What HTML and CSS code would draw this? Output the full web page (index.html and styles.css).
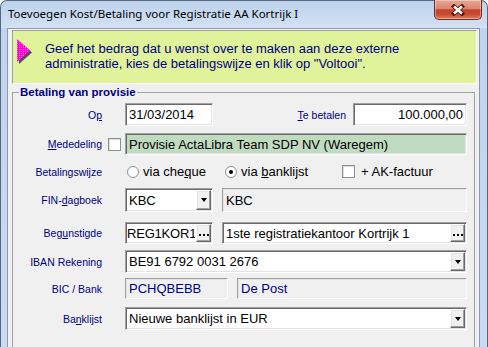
FILE: index.html
```html
<!doctype html>
<html lang="nl">
<head>
	<meta charset="UTF-8">
	<title>Toevoegen Kost/Betaling</title>

	<link rel="stylesheet" href="styles.css">

</head>
<body>
	<div class="window">
		<div class="titlebar">
			<span class="title">Toevoegen Kost/Betaling voor Registratie AA Kortrijk I</span>
			<div class="close">
				<svg width="14" height="12" viewBox="0 0 14 12">
					<path d="M3 2.5 L11 9.5 M11 2.5 L3 9.5" stroke="#4a1810" stroke-width="4.2" stroke-linecap="square"/>
					<path d="M3 2.5 L11 9.5 M11 2.5 L3 9.5" stroke="#fff" stroke-width="2.4"/>
				</svg>
			</div>
		</div>

		<div class="client">
			<div class="hint">
				<svg class="hintIcon" width="16" height="26" viewBox="0 0 16 26">
					<defs>
						<pattern id="dither" width="2" height="2" patternUnits="userSpaceOnUse">
							<rect width="2" height="2" fill="#ff00e0"/>
							<rect width="1" height="1" fill="#ff70c8"/>
						</pattern>
					</defs>
					<polygon points="2,2 2,25 15,13.5" fill="#505050"/>
					<polygon points="0,0 0,23 13,11.5" fill="url(#dither)"/>
				</svg>
				<p>Geef het bedrag dat u wenst over te maken aan deze externe<br>administratie, kies de betalingswijze en klik op "Voltooi".</p>
			</div>

			<fieldset class="group">
				<legend>Betaling van provisie</legend>

				<div class="row first">
					<label class="lbl">O<u>p</u></label>
					<div class="field short">31/03/2014</div>
					<label class="lbl lblFill"><u>T</u>e betalen</label>
					<div class="field amount">100.000,00</div>
				</div>

				<div class="row memoRow">
					<label class="lbl lblCheck"><u>M</u>ededeling</label>
					<span class="checkbox"></span>
					<div class="field memo">Provisie ActaLibra Team SDP NV (Waregem)</div>
				</div>

				<div class="row radioRow">
					<label class="lbl">Betalingswijze</label>
					<span class="opt opt1"><span class="radio"></span><span>via che<u>q</u>ue</span></span>
					<span class="opt opt2"><span class="radio on"></span><span>via <u>b</u>anklijst</span></span>
					<span class="opt"><span class="checkbox"></span><span>+ AK-factuur</span></span>
				</div>

				<div class="row dagboekRow">
					<label class="lbl">FIN-<u>d</u>agboek</label>
					<div class="field combo short"><span class="val">KBC</span><span class="btn"><i class="arrow"></i></span></div>
					<div class="ro next">KBC</div>
				</div>

				<div class="row begunstigdeRow">
					<label class="lbl">Beg<u>u</u>nstigde</label>
					<div class="field combo short"><span class="val tight">REG1KOR1</span><span class="btn"><i class="dots"></i></span></div>
					<div class="field combo next"><span class="val">1ste registratiekantoor Kortrijk 1</span><span class="btn"><i class="dots"></i></span></div>
				</div>

				<div class="row ibanRow">
					<label class="lbl">IBAN Rekening</label>
					<div class="field combo grow"><span class="val">BE91 6792 0031 2676</span><span class="btn"><i class="arrow"></i></span></div>
				</div>

				<div class="row bicRow">
					<label class="lbl">BIC / Bank</label>
					<div class="ro blue bic">PCHQBEBB</div>
					<div class="ro blue next">De Post</div>
				</div>

				<div class="row banklijstRow">
					<label class="lbl">Ba<u>n</u>klijst</label>
					<div class="field combo grow"><span class="val">Nieuwe banklijst in EUR</span><span class="btn"><i class="arrow"></i></span></div>
				</div>
			</fieldset>
		</div>
	</div>
</body>
</html>
```

FILE: styles.css
```css
* {
	box-sizing: border-box;
}

body {
	margin: 0;
	width: 488px;
	height: 347px;
	overflow: hidden;
	background: #fff;
	font-family: "Liberation Sans", Arial, sans-serif;
}

/* Aero style window frame */
.window {
	display: flex;
	flex-direction: column;
	height: 348px;
	padding: 0 7px 0 6px;
	border: 1px solid #56677f;
	border-bottom: none;
	border-radius: 7px 7px 0 0;
	background: linear-gradient(#bcd2ec, #d3e2f4 27px, #bfd5ee 27px, #c9dcf1);
}

.titlebar {
	display: flex;
	justify-content: space-between;
	align-items: flex-start;
	height: 27px;
	flex: none;
}

.title {
	padding: 5px 0 0 1px;
	font: 11.5px/16px "Noto Sans", sans-serif;
	color: #000;
}

.close {
	display: flex;
	align-items: center;
	justify-content: center;
	width: 48px;
	height: 20px;
	margin: -1px -2px 0 0;
	border: 1px solid #7a2a20;
	border-top: none;
	border-radius: 0 0 5px 5px;
	background: linear-gradient(#e9a898, #d98470 45%, #c4432d 52%, #c64a31 75%, #dd8060);
	box-shadow: inset 0 0 0 1px rgba(255,255,255,.35);
}

.client {
	flex: 1;
	background: #f0f0f0;
	border: 1px solid #8d99a9;
	border-bottom: none;
}

/* yellow info panel */
.hint {
	display: flex;
	align-items: flex-start;
	height: 54px;
	margin: 1px 2px 0 4px;
	border: 1px solid;
	border-color: #a0a0a0 #fff #fff #a0a0a0;
	background: #e0f29a;
}

.hintIcon {
	flex: none;
	margin: 8px 0 0 4px;
}

.hint p {
	margin: 10px 0 0 12px;
	font-size: 13px;
	line-height: 15px;
	color: #000080;
}

.group {
	min-width: 0;
	margin: 2px 4px 0;
	padding: 0 7px 40px 0;
	border: 1px solid #a0a0a0;
}

.group legend {
	margin-left: 6px;
	padding: 0 1px;
	font-size: 11.5px;
	font-weight: bold;
	line-height: 13px;
	color: #000080;
}

/* form rows */
.row {
	display: flex;
	align-items: center;
	height: 23px;
	margin-top: 7px;
}
.row.first { margin-top: 4px; }
.row.memoRow { height: 22px; }
.row.radioRow { height: 17px; margin-top: 8px; }
.row.dagboekRow { height: 24px; margin-top: 8px; }
.row.begunstigdeRow { height: 22px; margin-top: 10px; }
.row.ibanRow { margin-top: 6px; }
.row.bicRow { height: 21px; margin-top: 5px; }
.row.banklijstRow { margin-top: 8px; }

.lbl {
	flex: none;
	width: 89px;
	margin-right: 23px;
	text-align: right;
	font-size: 10.5px;
	color: #000080;
	white-space: nowrap;
}
.lbl.lblFill {
	flex: 1;
	width: auto;
	margin-right: 7px;
}
.lbl.lblCheck {
	margin-right: 6px;
}

/* sunken edit box */
.field {
	display: flex;
	align-items: center;
	height: 100%;
	padding: 0 3px;
	border: 1px solid;
	border-color: #a0a0a0 #fff #fff #a0a0a0;
	box-shadow: inset 1px 1px #696969, inset -1px -1px #e3e3e3;
	background: #fff;
	font-size: 13px;
	color: #000;
	white-space: nowrap;
	overflow: hidden;
}
.field.short { flex: none; width: 88px; }
.field.amount { flex: none; width: 114px; justify-content: flex-end; }
.field.memo { flex: 1; background: #c0dcc0; }
.field.grow { flex: 1; }
.field.next, .ro.next { flex: 1; margin-left: 9px; }

.field.combo { padding-right: 0; }
.field .val { flex: 1; overflow: hidden; }
/* the code fills the whole box, so it starts closer to the border */
.field .val.tight { margin-left: -2px; letter-spacing: -0.2px; }

.btn {
	display: flex;
	align-items: center;
	justify-content: center;
	flex: none;
	align-self: stretch;
	width: 15px;
	margin: 1px;
	border: 1px solid;
	border-color: #fff #696969 #696969 #fff;
	box-shadow: inset -1px -1px #a0a0a0, inset 1px 1px #e3e3e3;
	background: #f0f0f0;
}

.arrow {
	width: 0;
	height: 0;
	border-style: solid;
	border-width: 4px 3.5px 0;
	border-color: #000 transparent transparent;
}

.dots {
	width: 2px;
	height: 2px;
	margin-top: 3px;
	background: #000;
	box-shadow: -4px 0 #000, 4px 0 #000;
}

/* read only box */
.ro {
	display: flex;
	align-items: center;
	height: 100%;
	padding: 0 3px;
	border: 1px solid;
	border-color: #a0a0a0 #fff #fff #a0a0a0;
	box-shadow: inset 1px 1px #e3e3e3;
	background: #f0f0f0;
	font-size: 13px;
	color: #000;
	white-space: nowrap;
}
.ro.blue { color: #000080; }
.ro.bic { flex: none; width: 103px; }

.checkbox {
	flex: none;
	width: 13px;
	height: 13px;
	margin-right: 4px;
	border: 1px solid #8e8f8f;
	box-shadow: inset 1px 1px #dcdcdc;
	background: #fff;
}

.opt {
	display: flex;
	align-items: center;
	flex: none;
	font-size: 13px;
	color: #000;
	white-space: nowrap;
}
.opt1 { width: 98px; }
.opt2 { width: 117px; }
.opt .checkbox { margin: 0 6px 0 2px; }

.radio {
	position: relative;
	flex: none;
	width: 12px;
	height: 12px;
	margin: 0 4px 0 2px;
	border: 1px solid #8e8f8f;
	border-radius: 50%;
	background: #fff;
}
.radio.on::after {
	content: '';
	position: absolute;
	top: 3px;
	left: 3px;
	width: 4px;
	height: 4px;
	border-radius: 50%;
	background: #000;
}
```
